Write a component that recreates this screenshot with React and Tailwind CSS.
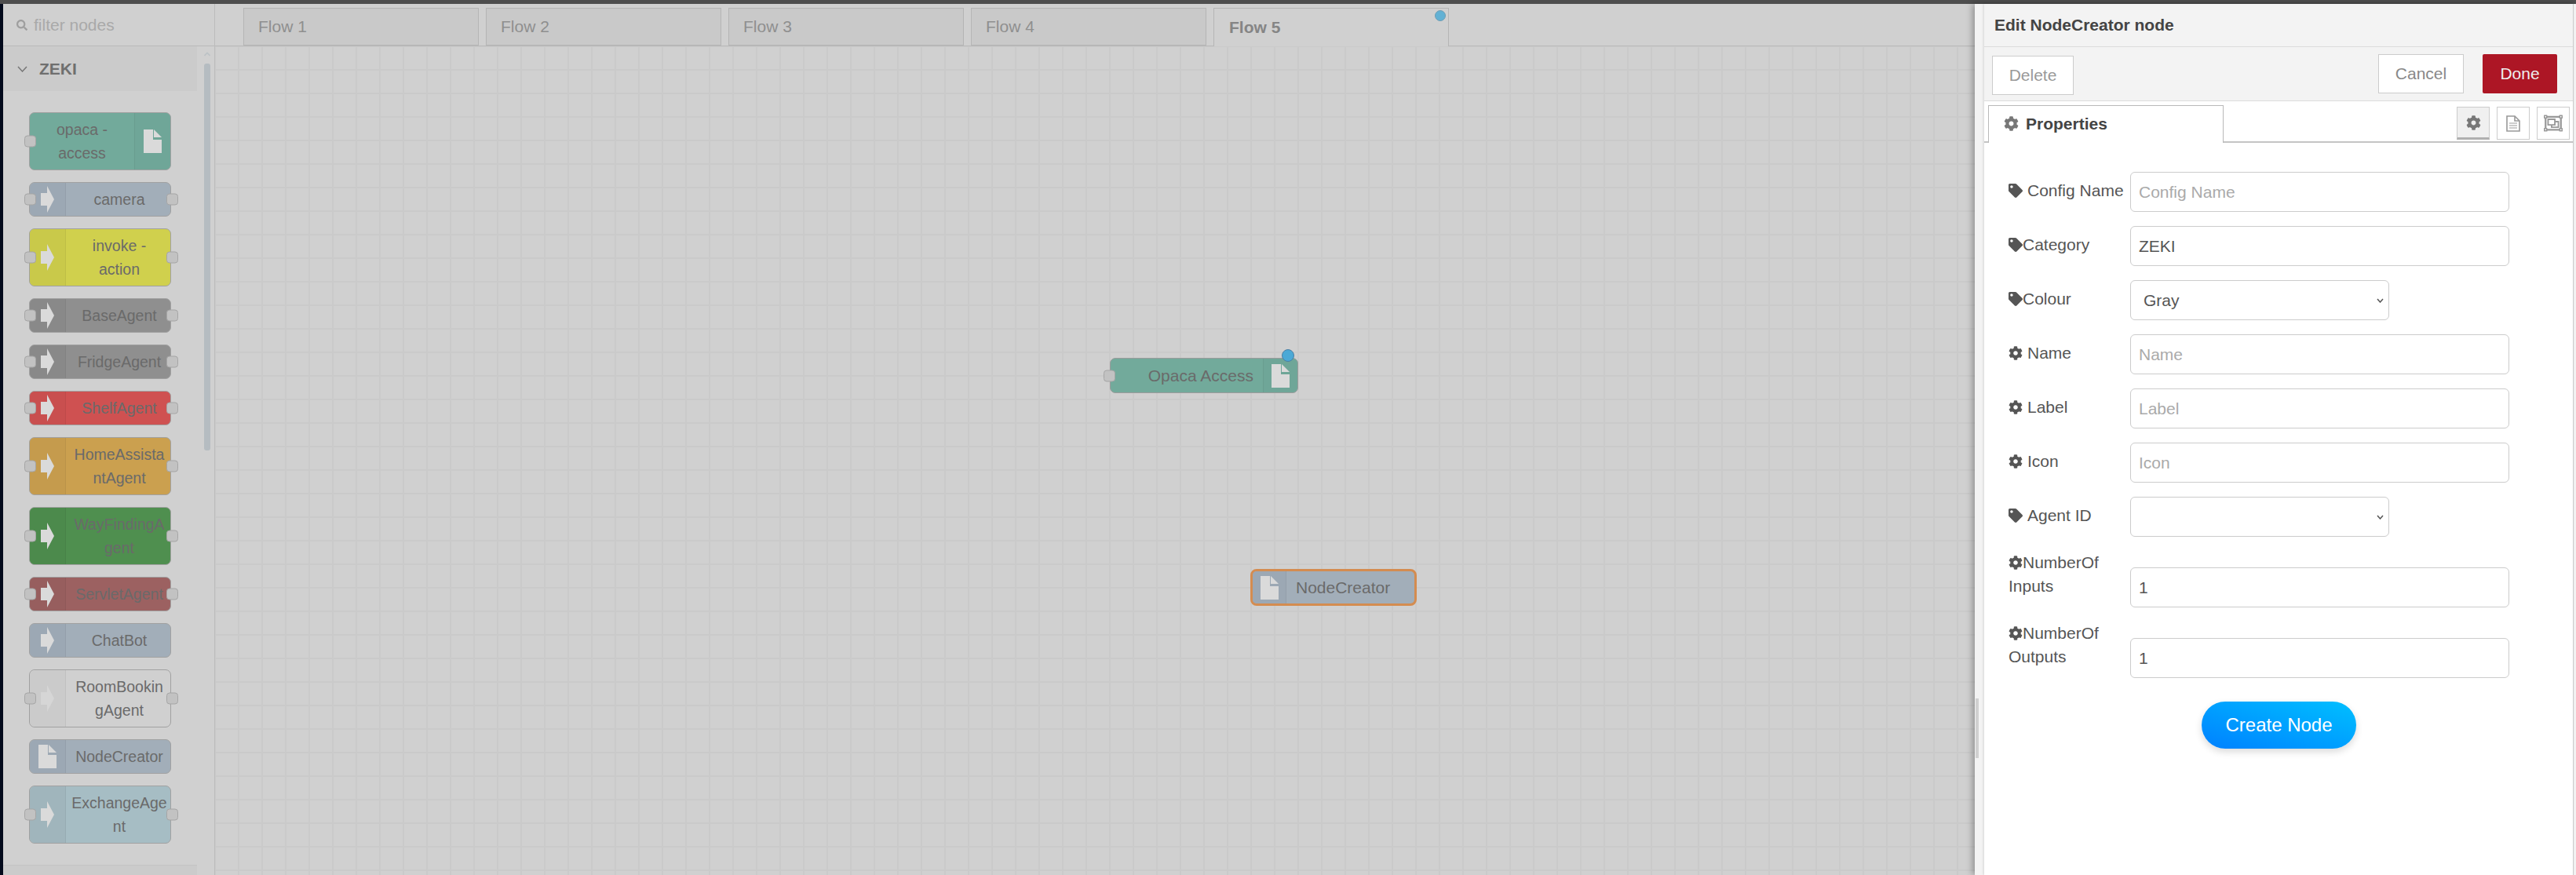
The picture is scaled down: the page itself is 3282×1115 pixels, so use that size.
import React from 'react';
import { FaCog, FaTag, FaSearch, FaRegObjectGroup } from 'react-icons/fa';

const ArrowIcon = ({ className = '' }) => (
  <svg width="17" height="34" viewBox="0 0 17 34" className={className}>
    <path d="M0 9H8V0L17 17L8 34V25H0Z" fill="currentColor" />
  </svg>
);

const FileIcon = () => (
  <svg width="23" height="30" viewBox="0 0 23 30">
    <path d="M0 0H12V13H23V30H0Z" fill="currentColor" />
    <path d="M13 0L23 10H13Z" fill="currentColor" />
  </svg>
);

const DocOutlineIcon = () => (
  <svg width="18" height="21" viewBox="0 0 18 21" fill="none" stroke="currentColor" strokeWidth="1.6">
    <path d="M1 1H11L17 7V20H1Z" />
    <path d="M11 1V7H17" />
    <path d="M4 10H14M4 13H14M4 16H14" strokeWidth="1.2" />
  </svg>
);

const Port = ({ className }) => (
  <div className={`absolute top-1/2 -translate-y-1/2 w-[15px] h-[15px] rounded-[4px] bg-[#c2c2c2] border border-[#a5a5a5] ${className}`} />
);

const palette = [
  { lines: ['opaca -', 'access'], bg: 'bg-[#72aa9b]', side: 'bg-[#6fa698]', right: true, ports: 'in' },
  { lines: ['camera'], bg: 'bg-[#a2aeb9]', side: 'bg-[#9ca8b4]', ports: 'both' },
  { lines: ['invoke -', 'action'], bg: 'bg-[#d0d04d]', side: 'bg-[#c9c94a]', ports: 'both' },
  { lines: ['BaseAgent'], bg: 'bg-[#8f8f8f]', side: 'bg-[#898989]', ports: 'both' },
  { lines: ['FridgeAgent'], bg: 'bg-[#8f8f8f]', side: 'bg-[#898989]', ports: 'both' },
  { lines: ['ShelfAgent'], bg: 'bg-[#cf5151]', side: 'bg-[#c94f4f]', ports: 'both' },
  { lines: ['HomeAssista', 'ntAgent'], bg: 'bg-[#cba04f]', side: 'bg-[#c59b4d]', ports: 'both' },
  { lines: ['WayFindingA', 'gent'], bg: 'bg-[#4f8f4f]', side: 'bg-[#4c8a4c]', ports: 'both' },
  { lines: ['ServletAgent'], bg: 'bg-[#9c6161]', side: 'bg-[#975e5e]', ports: 'both' },
  { lines: ['ChatBot'], bg: 'bg-[#a2aeb9]', side: 'bg-[#9ca8b4]', ports: 'none' },
  { lines: ['RoomBookin', 'gAgent'], bg: 'bg-[#d0d0d0]', side: 'bg-[#cbcbcb]', ports: 'both', faint: true },
  { lines: ['NodeCreator'], bg: 'bg-[#a2aeb9]', side: 'bg-[#9ca8b4]', ports: 'none', file: true },
  { lines: ['ExchangeAge', 'nt'], bg: 'bg-[#a6bdc4]', side: 'bg-[#a0b5bc]', ports: 'both' },
];

const PaletteNode = ({ node }) => (
  <div className={`relative flex w-[181px] ${node.lines.length > 1 ? 'h-[74px]' : 'h-[44px]'} rounded-[7px] border border-[#a1a1a1] ${node.bg}`}>
    {!node.right && (
      <div className={`w-[46px] shrink-0 flex items-center justify-center rounded-l-[7px] border-r border-black/5 ${node.side} ${node.faint ? 'text-[#d6d6d6]' : 'text-[#dadada]'}`}>
        {node.file ? <FileIcon /> : <ArrowIcon />}
      </div>
    )}
    <div className={`flex-1 flex flex-col items-center justify-center text-[19.5px] leading-[30px] text-[#6a6a6a] ${node.right ? '' : 'pl-[3px]'}`}>
      {node.lines.map(l => <span key={l} className="whitespace-nowrap">{l}</span>)}
    </div>
    {node.right && (
      <div className={`w-[46px] shrink-0 flex items-center justify-center rounded-r-[7px] border-l border-black/5 text-[#dadada] ${node.side}`}>
        <FileIcon />
      </div>
    )}
    {node.ports !== 'none' && <Port className="left-[-7px]" />}
    {node.ports === 'both' && <Port className="right-[-10px]" />}
  </div>
);

const Palette = () => (
  <div className="w-[270px] shrink-0 h-full flex flex-col bg-[#d0d0d0] border-r border-[#bcbcbc]">
    <div className="h-[54px] shrink-0 flex items-center pl-[17px] gap-[8px] border-b border-[#b9b9b9] text-[#a9a9a9] text-[21px]">
      <FaSearch className="text-[#9f9f9f] text-[14px]" />
      <span>filter nodes</span>
    </div>
    <div className="flex-1 flex min-h-0">
      <div className="w-[247px] flex flex-col">
        <div className="h-[57px] shrink-0 bg-[#cbcbcb] flex items-center pl-[18px] gap-[15px] font-bold text-[21px] text-[#6f6f6f]">
          <svg width="13" height="8" viewBox="0 0 13 8" fill="none" stroke="#777" strokeWidth="1.5"><path d="M1 1L6.5 7L12 1" /></svg>
          <span>ZEKI</span>
        </div>
        <div className="flex-1 flex flex-col gap-[15px] pt-[27px] pl-[33px]">
          {palette.map(n => <PaletteNode key={n.lines.join('')} node={n} />)}
        </div>
        <div className="h-[13px] shrink-0 bg-[#cbcbcb] border-t border-[#c4c4c4]" />
      </div>
      <div className="flex-1 flex flex-col items-center pt-[7px] pl-[3px]">
        <svg width="8" height="6" viewBox="0 0 8 6" fill="none" stroke="#bcc2c6" strokeWidth="1.6"><path d="M0.5 5L4 1.5L7.5 5" /></svg>
        <div className="w-[8px] h-[493px] mt-[9px] rounded-[3px] bg-[#b5bcc1]" />
      </div>
    </div>
  </div>
);

const Tab = ({ label, active }) => (
  <div className={`relative w-[300px] flex items-center pb-[1px] text-[21px] border border-[#b5b5b5] ${active ? 'border-b-0 bg-[#d0d0d0] font-bold text-[#858585] h-[49px] -mb-[1px] z-10 pl-[19px]' : 'h-[48px] bg-[#c9c9c9] text-[#8f8f8f] pl-[18px]'}`}>
    {label}
    {active && <div className="absolute right-[3px] top-[2px] w-[14px] h-[14px] rounded-full bg-[#62b1d4] border border-[#6e9db3]" />}
  </div>
);

const Canvas = () => (
  <div className="flex-1 h-full flex flex-col min-w-0">
    <div className="h-[54px] shrink-0 flex items-end gap-[9px] pl-[36px] bg-[#d0d0d0] border-b border-[#b9b9b9]">
      <Tab label="Flow 1" />
      <Tab label="Flow 2" />
      <Tab label="Flow 3" />
      <Tab label="Flow 4" />
      <Tab label="Flow 5" active />
    </div>
    <div className="relative flex-1 bg-[#d0d0d0] bg-[linear-gradient(to_right,#cacaca_2px,transparent_2px),linear-gradient(to_bottom,#cacaca_2px,transparent_2px)] bg-[size:30px_30px] bg-[position:-1px_-1px]">
      {/* nodes sit on the flow canvas */}
      <div className="absolute left-[1140px] top-[397px] w-[240px] h-[45px] flex rounded-[7px] border border-[#9b9b9b] bg-[#72aa9b]">
        <div className="flex-1 flex items-center justify-end pr-[12px] text-[21px] text-[#6a6a6a]">Opaca Access</div>
        <div className="w-[44px] shrink-0 flex items-center justify-center rounded-r-[7px] border-l border-black/5 text-[#dadada] bg-[#6fa698]">
          <FileIcon />
        </div>
        <Port className="left-[-9px]" />
        <div className="absolute right-[4px] top-[-12px] w-[16px] h-[16px] rounded-full bg-[#4ba9d6] border border-[#4a7fa5]" />
      </div>
      <div className="absolute left-[1319px] top-[666px] w-[212px] h-[47px] flex rounded-[8px] border-[3px] border-[#d48c50] bg-[#a2aeb9]">
        <div className="w-[43px] shrink-0 flex items-center justify-center rounded-l-[5px] border-r border-black/5 text-[#dadada] bg-[#9ca8b4]">
          <FileIcon />
        </div>
        <div className="flex-1 flex items-center pl-[12px] text-[21px] text-[#6a6a6a]">NodeCreator</div>
      </div>
    </div>
  </div>
);

const fields = [
  { icon: 'tag', text: 'Config Name', space: true, placeholder: 'Config Name' },
  { icon: 'tag', text: 'Category', value: 'ZEKI' },
  { icon: 'tag', text: 'Colour', select: 'Gray' },
  { icon: 'cog', text: 'Name', space: true, placeholder: 'Name' },
  { icon: 'cog', text: 'Label', space: true, placeholder: 'Label' },
  { icon: 'cog', text: 'Icon', space: true, placeholder: 'Icon' },
  { icon: 'tag', text: 'Agent ID', space: true, select: '' },
  { icon: 'cog', text: 'NumberOf', second: 'Inputs', value: '1' },
  { icon: 'cog', text: 'NumberOf', second: 'Outputs', value: '1' },
];

const Field = ({ f }) => {
  const Icon = f.icon === 'tag' ? FaTag : FaCog;
  return (
    <div className="flex mb-[18px]">
      <div className={`w-[155px] shrink-0 text-[21px] leading-[30px] text-[#555] ${f.second ? '' : 'pt-[9px]'}`}>
        <Icon className="inline-block text-[18px] align-[-2px]" />
        {f.space && <span className="inline-block w-[6px]" />}
        {f.text}
        {f.second && <br />}
        {f.second}
      </div>
      {f.select !== undefined ? (
        <div className={`w-[330px] h-[51px] flex items-center justify-between pl-[16px] pr-[6px] rounded-[6px] border border-[#ccc] text-[21px] text-[#555] ${f.second ? 'mt-[21px]' : ''}`}>
          <span>{f.select}</span>
          <svg width="9" height="6" viewBox="0 0 9 6" fill="none" stroke="#555" strokeWidth="1.5"><path d="M1 1L4.5 5L8 1" /></svg>
        </div>
      ) : (
        <div className={`w-[483px] h-[51px] flex items-center pl-[10px] rounded-[6px] border border-[#ccc] text-[21px] ${f.value ? 'text-[#555]' : 'text-[#aaa]'} ${f.second ? 'mt-[21px]' : ''}`}>
          {f.value || f.placeholder}
        </div>
      )}
    </div>
  );
};

const TabButton = ({ active, children }) => (
  <div className={`w-[42px] h-[42px] flex items-center justify-center border border-[#ccc] ${active ? 'bg-[#f0f0f0] border-b-[3px] border-b-[#b0b0b0] text-[#777]' : 'bg-white text-[#999]'}`}>
    {children}
  </div>
);

const Tray = () => (
  <div className="relative z-20 w-[766px] shrink-0 h-full flex bg-[#f3f3f3] shadow-[-3px_0_8px_rgba(0,0,0,0.3)]">
    {/* resize strip */}
    <div className="w-[12px] shrink-0 relative">
      <div className="absolute left-[1px] top-[885px] w-[4px] h-[76px] bg-[#d0d0d0]" />
    </div>
    <div className="flex-1 flex flex-col bg-white border-r border-[#ccc] mr-[3px] shadow-[-1px_0_3px_rgba(0,0,0,0.12)]">
      <div className="h-[55px] shrink-0 flex items-center pl-[13px] bg-[#f3f3f3] border-b border-[#dcdcdc] font-bold text-[21px] text-[#444]">
        Edit NodeCreator node
      </div>
      <div className="h-[69px] shrink-0 flex items-start justify-between bg-[#f3f3f3] border-b border-[#dcdcdc] pl-[10px] pr-[20px] text-[21px]">
        <div className="mt-[11px] w-[104px] h-[50px] flex items-center justify-center bg-white border border-[#ccc] text-[#999]">Delete</div>
        <div className="flex gap-[24px] mt-[9px]">
          <div className="w-[109px] h-[50px] flex items-center justify-center bg-white border border-[#ccc] text-[#888]">Cancel</div>
          <div className="w-[95px] h-[50px] flex items-center justify-center bg-[#ad1625] rounded-[2px] text-[#eee]">Done</div>
        </div>
      </div>
      <div className="h-[53px] shrink-0 flex items-end justify-between pl-[5px] pr-[4px] border-b-2 border-[#c4c4c4]">
        <div className="w-[300px] h-[48px] -mb-[2px] flex items-center gap-[9px] pl-[19px] pb-[2px] bg-white border border-b-0 border-[#b9b9b9] font-bold text-[21px] text-[#444]">
          <FaCog className="text-[#777] text-[19px]" />
          Properties
        </div>
        <div className="flex gap-[9px] mb-[2px]">
          <TabButton active><FaCog className="text-[19px]" /></TabButton>
          <TabButton><DocOutlineIcon /></TabButton>
          <TabButton><FaRegObjectGroup className="text-[24px]" /></TabButton>
        </div>
      </div>
      <div className="flex-1 flex flex-col pl-[31px] pt-[37px]">
        {fields.map((f, i) => <Field key={i} f={f} />)}
        <div className="w-[197px] h-[60px] ml-[246px] mt-[12px] flex items-center justify-center rounded-full bg-gradient-to-tr from-[#0080ff] to-[#00bfff] text-white text-[24px] shadow-[0_4px_10px_rgba(0,0,0,0.15)]">
          Create Node
        </div>
      </div>
    </div>
  </div>
);

export default function App() {
  return (
    <div className="w-[3282px] h-[1115px] flex flex-col overflow-hidden bg-white font-['Liberation_Sans',Arial,sans-serif]">
      <div className="h-[5px] shrink-0 bg-[#4e4e4e]" />
      <div className="flex-1 flex min-h-0">
        <div className="w-[4px] shrink-0 bg-[#030a1c]" />
        <Palette />
        <Canvas />
        <Tray />
      </div>
    </div>
  );
}
